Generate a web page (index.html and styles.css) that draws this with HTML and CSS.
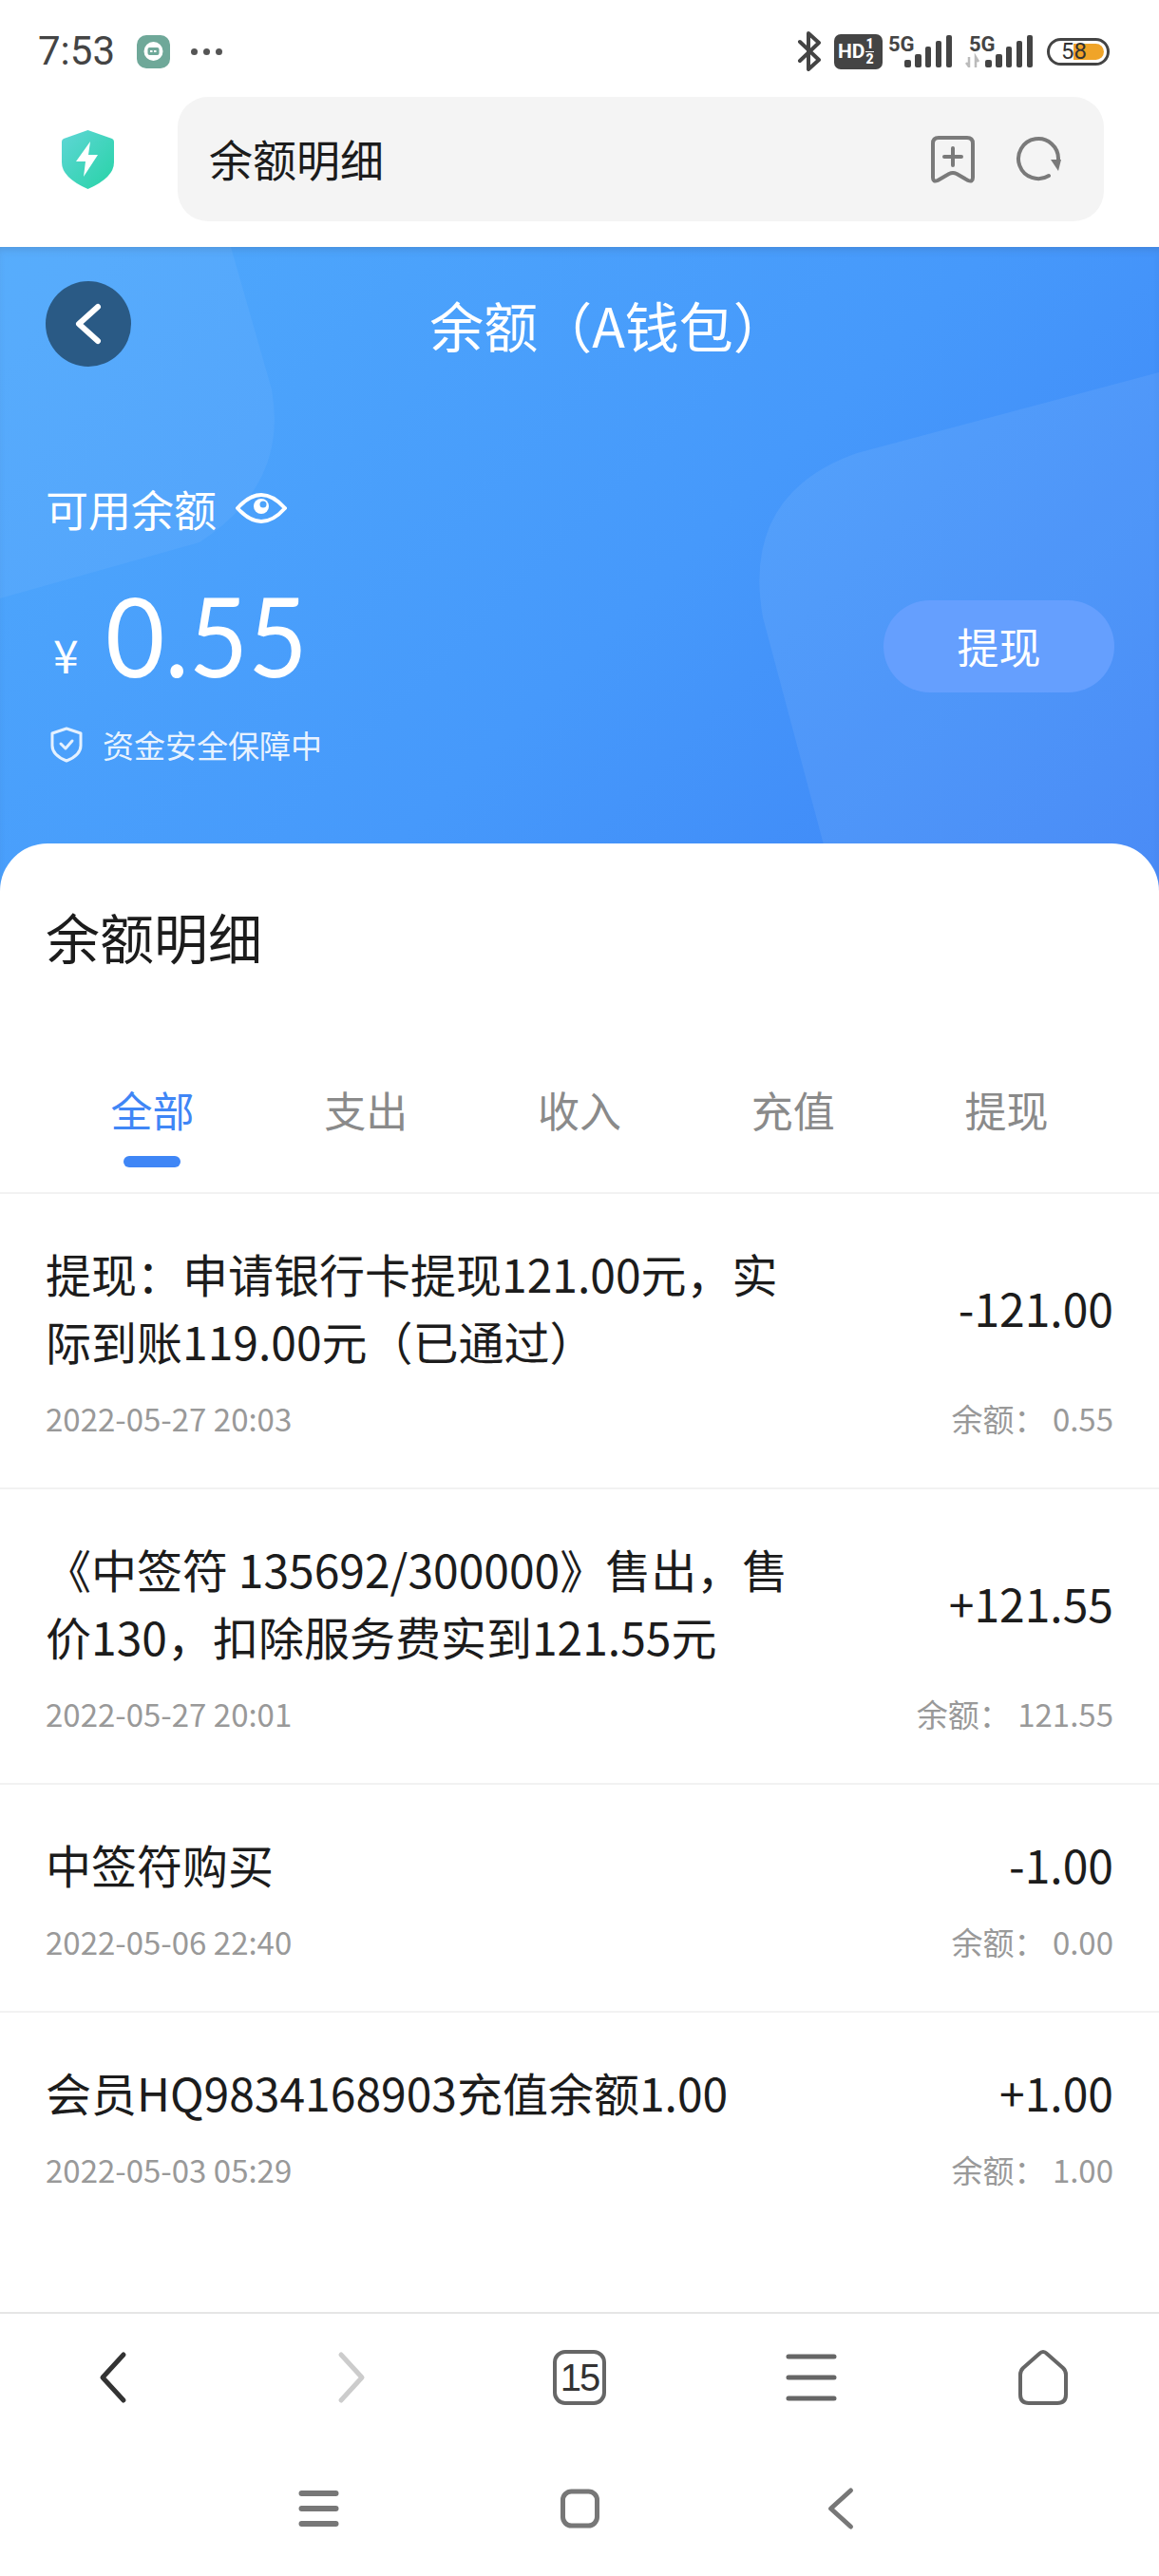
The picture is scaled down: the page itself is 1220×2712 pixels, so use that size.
FILE: index.html
```html
<!DOCTYPE html>
<html lang="zh-CN">
<head>
    <meta charset="UTF-8">
    <title>余额明细</title>
    <link rel="stylesheet" href="styles.css">
</head>
<body>
<div class="page">
    <div class="statusbar">
        <div class="status-left">
            <span class="clock">7:53</span>
            <span class="app-badge">
                <svg width="21" height="21" viewBox="0 0 21 21"><circle cx="10.5" cy="10" r="10" fill="#fff"/><rect x="4.5" y="6" width="12" height="8" rx="2" fill="#6fa899"/><rect x="7" y="9" width="2.5" height="2" fill="#fff"/><rect x="11" y="9" width="2.5" height="2" fill="#fff"/></svg>
            </span>
            <span class="status-dots"><i></i><i></i><i></i></span>
        </div>
        <div class="status-right">
            <svg width="26" height="42" viewBox="0 0 26 42" fill="none" stroke="#444" stroke-width="4" stroke-linecap="round" stroke-linejoin="round"><path d="M3 11 L23 30 L12 40 V2 L23 12 L3 31"/></svg>
            <span class="hd-badge">HD<span class="hd-frac"><b>1</b><b>2</b></span></span>
            <svg class="signal-first" width="68" height="42" viewBox="0 0 68 42"><text class="signal-label" x="0" y="21">5G</text><g fill="#444" transform="translate(0 2)"><rect x="17" y="28" width="7" height="8" rx="2"/><rect x="28" y="22" width="7" height="14" rx="2"/><rect x="39" y="14" width="6" height="22" rx="2"/><rect x="50" y="8" width="6" height="28" rx="2"/><rect x="61" y="2" width="6" height="34" rx="2"/></g></svg>
            <svg width="72" height="42" viewBox="0 0 72 42"><text class="signal-label" x="4" y="21">5G</text><path d="M4 27 V38 M1 33 L4 37 M11 38 V27 L14 32" stroke="#bbb" stroke-width="2.5" fill="none"/><g fill="#444" transform="translate(0 2)"><rect x="21" y="28" width="7" height="8" rx="2"/><rect x="32" y="22" width="7" height="14" rx="2"/><rect x="43" y="14" width="6" height="22" rx="2"/><rect x="54" y="8" width="6" height="28" rx="2"/><rect x="65" y="2" width="6" height="34" rx="2"/></g></svg>
            <span class="battery"><span class="battery-fill"></span><span class="battery-num">58</span></span>
        </div>
    </div>

    <div class="addressbar">
        <svg class="site-shield" width="55" height="62" viewBox="0 0 55 62">
            <defs>
                <linearGradient id="shieldFill" x1="0" y1="0" x2="1" y2="1">
                    <stop offset="0" stop-color="#5fd6d6"/>
                    <stop offset="1" stop-color="#27d3a6"/>
                </linearGradient>
            </defs>
            <path d="M27.5 0 L53 9 Q55 10 55 12 V34 Q55 50 27.5 62 Q0 50 0 34 V12 Q0 10 2 9 Z" fill="url(#shieldFill)"/>
            <path d="M30 12 L15 33 H25 L23 49 L38 26 H28 Z" fill="#fff"/>
        </svg>
        <div class="url-box">
            <span class="url-text">余额明细</span>
            <div class="url-actions">
                <svg width="46" height="50" viewBox="0 0 46 50" fill="none" stroke="#7a7a7a" stroke-width="4" stroke-linecap="round" stroke-linejoin="round"><path d="M8 2 H38 Q44 2 44 8 V44 Q44 49 39 47 L27 40 Q23 38 19 40 L7 47 Q2 49 2 44 V8 Q2 2 8 2 Z"/><path d="M14 22 H32 M23 13 V31"/></svg>
                <svg width="48" height="48" viewBox="0 0 48 48" fill="none" stroke="#7a7a7a" stroke-width="4" stroke-linecap="round"><path d="M35 41 A21 21 0 1 1 45 24"/><path d="M37 24 H48 L45 36 Z" fill="#7a7a7a" stroke="none"/></svg>
            </div>
        </div>
    </div>

    <div class="hero">
        <svg class="hero-shapes" width="1220" height="678" viewBox="0 0 1220 678" fill="#fff">
            <path d="M243 0 L286 150 Q304 250 210 311 L0 370 V0 Z" opacity="0.05"/>
            <path d="M1220 132 L902 217 Q780 260 803 390 L880 678 H1220 Z" opacity="0.07"/>
        </svg>
        <div class="hero-top">
            <a class="back-btn">
                <svg width="32" height="46" viewBox="0 0 32 46" fill="none" stroke="#fff" stroke-width="6" stroke-linecap="round" stroke-linejoin="round"><path d="M26 5 L6 23 L26 41"/></svg>
            </a>
            <div class="hero-title">余额（A钱包）</div>
        </div>
        <div class="balance-label">
            <span>可用余额</span>
            <svg width="54" height="36" viewBox="0 0 54 36" fill="none" stroke="#fff" stroke-width="4"><path d="M2 18 Q27 -10 52 18 Q27 46 2 18 Z"/><circle cx="27" cy="16" r="8" fill="#fff" stroke="none"/><circle cx="29" cy="14" r="3.5" fill="#4ca3fb" stroke="none"/></svg>
        </div>
        <div class="balance-row">
            <div class="balance-amount"><span class="yen">¥</span><span class="money">0.55</span></div>
            <a class="withdraw-btn">提现</a>
        </div>
        <div class="secure-note">
            <svg width="34" height="38" viewBox="0 0 34 38" fill="none" stroke="#fff" stroke-opacity="0.85" stroke-width="3" stroke-linecap="round" stroke-linejoin="round"><path d="M17 2 L32 7 V20 Q32 30 17 36 Q2 30 2 20 V7 Z"/><path d="M11 18 L16 23 L23 15"/></svg>
            <span>资金安全保障中</span>
        </div>
    </div>

    <div class="sheet">
        <h2 class="sheet-title">余额明细</h2>
        <div class="tabs">
            <div class="tab active">全部</div>
            <div class="tab">支出</div>
            <div class="tab">收入</div>
            <div class="tab">充值</div>
            <div class="tab">提现</div>
        </div>
        <div class="record">
            <div class="record-main">
                <div class="record-title">提现：申请银行卡提现121.00元，实际到账119.00元（已通过）</div>
                <div class="record-amount">-121.00</div>
            </div>
            <div class="record-meta"><span>2022-05-27 20:03</span><span>余额：&nbsp;0.55</span></div>
        </div>
        <div class="record">
            <div class="record-main">
                <div class="record-title">《中签符 135692/300000》售出，售价130，扣除服务费实到121.55元</div>
                <div class="record-amount">+121.55</div>
            </div>
            <div class="record-meta"><span>2022-05-27 20:01</span><span>余额：&nbsp;121.55</span></div>
        </div>
        <div class="record">
            <div class="record-main">
                <div class="record-title">中签符购买</div>
                <div class="record-amount">-1.00</div>
            </div>
            <div class="record-meta"><span>2022-05-06 22:40</span><span>余额：&nbsp;0.00</span></div>
        </div>
        <div class="record last">
            <div class="record-main">
                <div class="record-title">会员HQ9834168903充值余额1.00</div>
                <div class="record-amount">+1.00</div>
            </div>
            <div class="record-meta"><span>2022-05-03 05:29</span><span>余额：&nbsp;1.00</span></div>
        </div>
    </div>

    <div class="browser-nav">
        <svg width="60" height="60" viewBox="0 0 60 60" fill="none" stroke="#333" stroke-width="5" stroke-linecap="round" stroke-linejoin="round"><path d="M38 6 L16 30 L38 54"/></svg>
        <svg width="60" height="60" viewBox="0 0 60 60" fill="none" stroke="#ccc" stroke-width="5" stroke-linecap="round" stroke-linejoin="round"><path d="M23 6 L45 30 L23 54"/></svg>
        <div class="tab-count">15</div>
        <svg width="54" height="50" viewBox="0 0 54 50" fill="none" stroke="#666" stroke-width="5" stroke-linecap="round"><path d="M3 3 H51 M3 25 H51 M3 47 H51"/></svg>
        <svg width="56" height="60" viewBox="0 0 56 60" fill="none" stroke="#666" stroke-width="4" stroke-linejoin="round"><path d="M24 5 Q28 1 32 5 L49 20 Q52 23 52 27 V48 Q52 57 43 57 H13 Q4 57 4 48 V27 Q4 23 7 20 Z"/></svg>
    </div>

    <div class="system-nav">
        <svg width="44" height="40" viewBox="0 0 44 40" fill="none" stroke="#777" stroke-width="6" stroke-linecap="round"><path d="M4 4 H40 M4 20 H40 M4 36 H40"/></svg>
        <svg width="42" height="42" viewBox="0 0 42 42" fill="none" stroke="#777" stroke-width="5"><rect x="3" y="3" width="36" height="36" rx="9"/></svg>
        <svg width="32" height="46" viewBox="0 0 32 46" fill="none" stroke="#777" stroke-width="5" stroke-linecap="round" stroke-linejoin="round"><path d="M26 4 L5 23 L26 42"/></svg>
    </div>
</div>
</body>
</html>
```

FILE: styles.css
```css
* {
    box-sizing: border-box;
}
body {
    margin: 0;
    background: #fff;
    font-family: "Noto Sans CJK SC", "Noto Sans", sans-serif;
    color: #1c1c1c;
}
.page {
    width: 1220px;
    height: 2712px;
    display: flex;
    flex-direction: column;
    overflow: hidden;
}

/* status bar */
.statusbar {
    height: 102px;
    padding: 6px 52px 0 40px;
    display: flex;
    justify-content: space-between;
    align-items: center;
    flex-shrink: 0;
}
.status-left {
    display: flex;
    align-items: center;
}
.clock {
    font-family: Roboto, sans-serif;
    font-size: 42px;
    line-height: 48px;
    color: #444;
    width: 104px;
}
.app-badge {
    width: 35px;
    height: 35px;
    border-radius: 10px;
    background: #6fa899;
    display: flex;
    align-items: center;
    justify-content: center;
}
.status-dots {
    display: flex;
    gap: 6px;
    margin-left: 22px;
}
.status-dots i {
    width: 7px;
    height: 7px;
    border-radius: 50%;
    background: #555;
}
.status-right {
    display: flex;
    align-items: center;
    gap: 13px;
}
.signal-first {
    margin-left: -7px;
}
.signal-label {
    font-family: Roboto, sans-serif;
    font-weight: 700;
    font-size: 22px;
    fill: #444;
}
.hd-badge {
    width: 51px;
    height: 37px;
    border-radius: 7px;
    background: #444;
    color: #fff;
    font-family: Roboto, sans-serif;
    font-weight: 700;
    font-size: 21px;
    display: flex;
    align-items: center;
    padding-left: 4px;
}
.hd-frac {
    display: flex;
    flex-direction: column;
    margin-left: 1px;
    font-size: 14px;
    line-height: 15px;
}
.hd-frac b:first-child {
    border-bottom: 1px solid #fff;
}
.battery {
    position: relative;
    width: 66px;
    height: 29px;
    border: 3px solid #444;
    border-radius: 15px;
    margin-left: 1px;
}
.battery-fill {
    position: absolute;
    top: 3px;
    bottom: 3px;
    left: 25px;
    right: 3px;
    background: #f0a428;
    border-radius: 0 10px 10px 0;
}
.battery-num {
    position: absolute;
    left: 12px;
    top: -3px;
    font-family: Roboto, sans-serif;
    font-size: 24px;
    line-height: 29px;
    color: #333;
}

/* address bar */
.addressbar {
    height: 158px;
    padding: 0 58px 27px 65px;
    display: flex;
    align-items: center;
    flex-shrink: 0;
}
.site-shield {
    flex-shrink: 0;
    margin-right: 67px;
}
.url-box {
    flex: 1;
    height: 131px;
    background: #f4f4f4;
    border-radius: 32px;
    padding: 0 45px 0 33px;
    display: flex;
    align-items: center;
    justify-content: space-between;
}
.url-text {
    font-size: 46px;
    line-height: 60px;
    margin-top: -3px;
    color: #1c1c1c;
}
.url-actions {
    display: flex;
    align-items: center;
    gap: 43px;
}

/* blue header */
.hero {
    position: relative;
    height: 678px;
    flex-shrink: 0;
    padding: 36px 47px 0 48px;
    background: linear-gradient(135deg, #4fa9fc 0%, #4699fb 55%, #3d83f6 100%);
    box-shadow: inset 0 6px 8px -4px rgba(60, 80, 110, 0.25);
    color: #fff;
}
.hero-shapes {
    position: absolute;
    top: 0;
    left: 0;
}
.hero-top,
.balance-label,
.balance-row,
.secure-note {
    position: relative;
}
.hero-top {
    display: flex;
    align-items: center;
    height: 90px;
    padding-right: 30px;
}
.back-btn {
    width: 90px;
    height: 90px;
    border-radius: 50%;
    background: #2a5a85;
    display: flex;
    align-items: center;
    justify-content: center;
    flex-shrink: 0;
}
.hero-title {
    flex: 1;
    text-align: center;
    font-size: 57px;
    line-height: 80px;
}
.balance-label {
    display: flex;
    align-items: center;
    gap: 20px;
    margin-top: 119px;
    height: 60px;
    font-size: 45px;
}
.balance-row {
    display: flex;
    align-items: center;
    justify-content: space-between;
    margin-top: 55px;
    height: 120px;
}
.balance-amount {
    display: flex;
    align-items: baseline;
    padding: 0 0 24px 8px;
}
.yen {
    font-size: 48px;
    width: 55px;
    transform: translateY(-4px);
}
.money {
    display: inline-block;
    width: 212px;
    white-space: nowrap;
    font-family: Lato, sans-serif;
    font-size: 117px;
    line-height: 120px;
    transform: scaleX(0.92);
    transform-origin: left center;
}
.withdraw-btn {
    width: 243px;
    height: 97px;
    border-radius: 49px;
    background: #659ffe;
    font-size: 44px;
    display: flex;
    align-items: center;
    justify-content: center;
}
.secure-note {
    display: flex;
    align-items: center;
    gap: 21px;
    margin-top: 24px;
    height: 40px;
    padding-left: 5px;
    font-size: 33px;
    color: rgba(255, 255, 255, 0.9);
}

/* records */
.sheet {
    position: relative;
    flex: 1;
    margin-top: -50px;
    background: #fff;
    border-radius: 50px 50px 0 0;
}
.sheet-title {
    margin: 0;
    padding: 57px 48px 0;
    font-size: 57px;
    font-weight: 400;
    line-height: 80px;
}
.tabs {
    display: grid;
    grid-template-columns: repeat(5, 1fr);
    padding: 8px 48px 0;
    margin-top: 103px;
    height: 129px;
    border-bottom: 2px solid #f2f2f2;
    align-items: start;
}
.tab {
    position: relative;
    text-align: center;
    font-size: 44px;
    line-height: 64px;
    color: #8a8a8a;
}
.tab.active {
    color: #3f86f6;
}
.tab.active::after {
    content: "";
    position: absolute;
    left: 50%;
    top: 81px;
    width: 60px;
    height: 12px;
    margin-left: -30px;
    border-radius: 6px;
    background: #3f86f6;
}
.record {
    padding: 48px 48px 47px;
    border-bottom: 2px solid #f2f2f2;
}
.record.last {
    border-bottom: none;
}
.record-main {
    display: flex;
    justify-content: space-between;
    align-items: center;
}
.record-title {
    width: 800px;
    font-size: 48px;
    line-height: 71px;
}
.record-amount {
    font-size: 48px;
    line-height: 71px;
    white-space: nowrap;
}
.record-meta {
    display: flex;
    justify-content: space-between;
    margin-top: 20px;
    font-size: 33px;
    line-height: 52px;
    color: #999;
}

/* bottom bars */
.browser-nav {
    height: 136px;
    flex-shrink: 0;
    border-top: 2px solid #e6e6e6;
    display: grid;
    grid-template-columns: repeat(5, 1fr);
    align-items: center;
    justify-items: center;
}
.tab-count {
    width: 56px;
    height: 58px;
    border: 4px solid #666;
    border-radius: 13px;
    font-family: "Liberation Sans", sans-serif;
    font-size: 40px;
    line-height: 50px;
    letter-spacing: -2px;
    text-align: center;
    color: #333;
}
.system-nav {
    height: 142px;
    flex-shrink: 0;
    display: flex;
    align-items: center;
    justify-content: center;
}
.system-nav svg {
    width: 275px;
}
```
